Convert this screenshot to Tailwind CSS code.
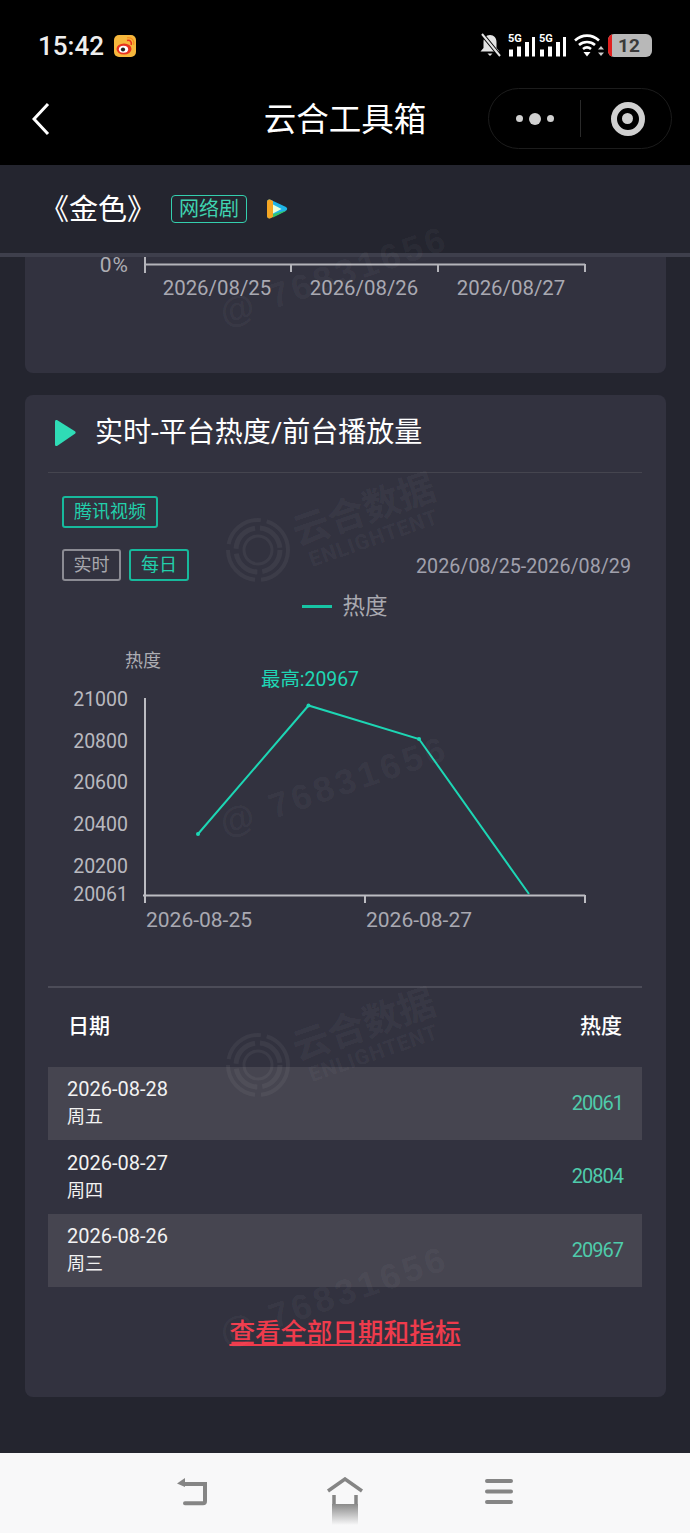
<!DOCTYPE html>
<html lang="zh-CN">
  <head>
    <meta charset="UTF-8" />
    <meta name="viewport" content="width=device-width, initial-scale=1.0" />
    <title>云合工具箱</title>
    <script src="https://cdn.jsdelivr.net/npm/@tailwindcss/browser@4"></script>
  </head>
  <body class="bg-[#24252f] text-white antialiased font-[family-name:Roboto,'Noto_Sans_CJK_SC',sans-serif]">
    <div class="relative w-[690px] h-[1533px] overflow-hidden flex flex-col">
      <!-- status bar -->
      <div class="relative z-20 bg-black h-[82px] shrink-0 pt-[24px] pl-[38px] pr-[38px] flex items-start justify-between">
        <div class="flex items-center gap-[10px] h-[44px]">
          <span class="text-[26px] font-medium text-[#eeeeee] leading-none">15:42</span>
          <svg width="22" height="22" viewBox="0 0 22 22">
            <rect width="22" height="22" rx="5" fill="#f6b73c" />
            <ellipse cx="10" cy="14" rx="7.5" ry="5.5" fill="#e8321f" />
            <ellipse cx="9.5" cy="14.2" rx="4.6" ry="3.5" fill="#fff" />
            <circle cx="9" cy="14.5" r="2.1" fill="#222" />
            <path d="M13 5.5c3-.8 5 1.300 4.200 4.500" fill="none" stroke="#e8321f" stroke-width="1.600" />
            <path d="M13 2.800c5-.7 7.500 2.700 6.600 7" fill="none" stroke="#f98b1e" stroke-width="1.200" />
          </svg>
        </div>
        <div class="flex items-center h-[44px] -mt-[1px]">
          <svg width="24" height="24" viewBox="0 0 24 24">
            <path d="M11 2c-4 0-6.500 3-6.500 7v6l-3 3.500h19l-3-3.500v-6c0-4-2.500-7-6.500-7z" fill="#e4e4e4" />
            <path d="M8.500 20.500h5l-2.500 2.500z" fill="#e4e4e4" />
            <path d="M3 1l18 22" stroke="#000" stroke-width="4" />
            <path d="M3 1l18 22" stroke="#e4e4e4" stroke-width="2" />
          </svg>
          <svg width="29" height="26" viewBox="0 0 29 26" class="ml-[4px]">
            <text x="1" y="10" class="text-[11px] font-bold" fill="#fff">5G</text>
            <path d="M2 17.500h4v7h-4zM10 14.500h4v10h-4zM18 10h4v14.500h-4zM25 5h3v19.500h-3z" fill="#fff" />
          </svg>
          <svg width="29" height="26" viewBox="0 0 29 26" class="ml-[2px]">
            <text x="1" y="10" class="text-[11px] font-bold" fill="#fff">5G</text>
            <path d="M2 17.500h4v7h-4zM10 14.500h4v10h-4zM18 10h4v14.500h-4zM25 5h3v19.500h-3z" fill="#fff" />
          </svg>
          <svg width="32" height="26" viewBox="0 0 32 26" class="ml-[6px]">
            <path d="M2 8.500c7-6.500 17-6.500 24 0M6 13c4.500-4 11.500-4 16 0M10 17c2.500-2 5.500-2 8 0" fill="none" stroke="#fff" stroke-width="2.600" />
            <path d="M10.500 20h7l-3.500 4.500z" fill="#fff" />
            <path d="M28 14l3 3.500h-6zM28 24l3-3.500h-6z" fill="#ccc" />
          </svg>
          <div class="relative w-[44px] h-[23px] rounded-[6px] bg-[#b8b8b8] ml-[3px] overflow-hidden flex items-center justify-center">
            <span class="absolute left-0 top-0 bottom-0 w-[4px] bg-[#e0201f]"></span>
            <span class="text-[19px] font-bold text-[#3a3a3a] leading-none pr-[2px]">12</span>
          </div>
        </div>
      </div>

      <!-- nav bar -->
      <div class="relative z-20 bg-black h-[83px] shrink-0 grid grid-cols-[1fr_auto_1fr] items-center px-[18px]">
        <svg width="18" height="34" viewBox="0 0 18 34" class="ml-[14px] -mt-[10px]">
          <path d="M16 2L2 17l14 15" fill="none" stroke="#fff" stroke-width="3" />
        </svg>
        <h1 class="text-[32.5px] leading-none font-normal text-white -mt-[6px]">云合工具箱</h1>
        <div class="justify-self-end -mt-[10px] w-[184px] h-[61px] rounded-full border border-[#1c1c1c] flex items-center">
          <div class="w-[92px] h-[37px] border-r border-[#2a2a2a] flex items-center justify-center gap-[6px]">
            <span class="w-[7px] h-[7px] rounded-full bg-[#d0d0d0]"></span>
            <span class="w-[12px] h-[12px] rounded-full bg-[#d0d0d0]"></span>
            <span class="w-[7px] h-[7px] rounded-full bg-[#d0d0d0]"></span>
          </div>
          <div class="flex-1 flex justify-center pl-[3px]">
            <div class="w-[34px] h-[34px] rounded-full border-[6px] border-[#d0d0d0] flex items-center justify-center">
              <span class="w-[11px] h-[11px] rounded-full bg-[#d0d0d0]"></span>
            </div>
          </div>
        </div>
      </div>

      <!-- drama title -->
      <div class="relative z-[5] h-[92px] shrink-0 bg-[#24252f] border-b-[4px] border-[#3e3f4c] flex items-center pl-[40px]">
        <span class="text-[29px] leading-none text-white pt-[2px]">《金色》</span>
        <span class="ml-[15px] h-[28px] w-[76px] rounded-[4px] border border-[#34cfae] text-[#3fd3b0] text-[20px] leading-none flex items-center justify-center">网络剧</span>
        <svg width="22" height="20" viewBox="0 0 22 20" class="ml-[19px]">
          <path d="M1 3c0-2 1.500-3 3.500-2.200l15 7c2.300 1.200 2.300 3 0 4.200l-15 7c-2 .8-3.500-.2-3.500-2.200z" fill="#1fb6e8" />
          <path d="M1 3c0-2 1.500-3 3.500-2.200l2.500 1.200v16l-2.500 1.200c-2 .8-3.500-.2-3.500-2.200z" fill="#f5a623" />
          <path d="M7 15l13-3.500c-.300.400-.500.700-1 1l-12 6z" fill="#35c46a" />
          <path d="M7 5.500l8.500 4.500-8.500 4.500z" fill="#eaffd8" />
        </svg>
      </div>

      <main class="flex-1 pl-[25px] pr-[24px] bg-[#24252f]">
        <!-- card 1, scrolled to its bottom -->
        <section class="h-[116px] bg-[#32323f] rounded-b-[8px]">
          <svg width="640" height="50" viewBox="25 257 640 50" class="block overflow-visible">
            <path d="M145 257v16M145 264.500h440M291 264v8M438 264v8M585 264v8" fill="none" stroke="#b4b4ba" stroke-width="2" />
            <text x="129" y="271.500" text-anchor="end" class="text-[21px] tracking-[1px]" fill="#adadb3">0%</text>
            <g class="text-[20.400px]" fill="#a9a9b2" text-anchor="middle">
              <text x="217" y="295">2026/08/25</text>
              <text x="364" y="295">2026/08/26</text>
              <text x="511" y="295">2026/08/27</text>
            </g>
          </svg>
        </section>

        <!-- card 2 -->
        <section class="mt-[22px] h-[1002px] bg-[#32323f] rounded-[8px] pl-[23px] pr-[24px]">
          <div class="h-[78px] border-b border-[#45454f] flex items-center pl-[6px] pb-[2px]">
            <svg width="22" height="28" viewBox="0 0 22 28">
              <path d="M1 2.500v23c0 1.500 1.200 2 2.400 1.300l17.500-12c1-.7 1-1.800 0-2.500L3.400 1.200C2.200.5 1 1 1 2.500z" fill="#2fdcb6" />
            </svg>
            <h2 class="ml-[19px] text-[28px] leading-none font-normal text-white">实时-平台热度/前台播放量</h2>
          </div>

          <div class="pl-[14px] pt-[23px]">
            <span class="inline-flex items-center justify-center w-[96px] h-[32px] rounded-[3px] border-2 border-[#17b99c] text-[#22cfab] text-[18px] leading-none">腾讯视频</span>
          </div>
          <div class="flex items-center pl-[14px] pr-[11px] mt-[21px]">
            <span class="flex items-center justify-center w-[59px] h-[32px] rounded-[3px] border-2 border-[#8b8b93] text-[#a7a7ad] text-[18px] leading-none">实时</span>
            <span class="ml-[8px] flex items-center justify-center w-[60px] h-[32px] rounded-[3px] border-2 border-[#17b99c] text-[#22cfab] text-[18px] leading-none">每日</span>
            <span class="ml-auto mt-[3px] text-[#a0a0ac] text-[19.700px] leading-none">2026/08/25-2026/08/29</span>
          </div>
          <div class="flex items-center justify-center gap-[10px] h-[28px] mt-[11px]">
            <span class="w-[30px] h-[3px] bg-[#17c4a4]"></span>
            <span class="text-[#a9a9b0] text-[22.500px] leading-none">热度</span>
          </div>

          <!-- line chart -->
          <svg width="594" height="290" viewBox="48 640 594 290" class="block mt-[20px] overflow-visible">
            <text x="125" y="667" class="text-[18px]" fill="#adadb3">热度</text>
            <text x="261" y="686" class="text-[19.400px]" fill="#1fd6b4">最高:20967</text>
            <g class="text-[19.500px]" fill="#b9b9bf" text-anchor="end">
              <text x="128" y="706">21000</text>
              <text x="128" y="748">20800</text>
              <text x="128" y="789">20600</text>
              <text x="128" y="831">20400</text>
              <text x="128" y="873">20200</text>
              <text x="128" y="901">20061</text>
            </g>
            <path d="M145 698v205M143 895.500h442M365 895v8M585 895v8" fill="none" stroke="#bcbcc2" stroke-width="2" />
            <polyline points="198,834 308.500,705.500 419,739 529,894" fill="none" stroke="#1dd6b4" stroke-width="2" />
            <circle cx="198" cy="834" r="2" fill="#1dd6b4" />
            <circle cx="308.500" cy="705.500" r="2" fill="#1dd6b4" />
            <circle cx="419" cy="739" r="2" fill="#1dd6b4" />
            <g class="text-[21px]" fill="#a9a9b2" text-anchor="middle">
              <text x="199" y="927">2026-08-25</text>
              <text x="419" y="927">2026-08-27</text>
            </g>
          </svg>

          <!-- table -->
          <div class="mt-[56px] border-t-2 border-[#4c4c58] h-[81px] flex items-center justify-between px-[20px]">
            <span class="text-[21px] leading-none font-medium -mt-[2px]">日期</span>
            <span class="text-[21px] leading-none font-medium -mt-[2px]">热度</span>
          </div>
          <div class="h-[73px] bg-[#464550] flex items-center justify-between pl-[19px] pr-[19px]">
            <div class="text-[20px] leading-[27px] text-[#f2f2f2] -mt-[1px]"><div>2026-08-28</div><div class="text-[18px]">周五</div></div>
            <span class="text-[20px] tracking-[-1px] text-[#4fcbab] leading-none -mt-[2px]">20061</span>
          </div>
          <div class="h-[74px] flex items-center justify-between pl-[19px] pr-[19px]">
            <div class="text-[20px] leading-[27px] text-[#f2f2f2] -mt-[1px]"><div>2026-08-27</div><div class="text-[18px]">周四</div></div>
            <span class="text-[20px] tracking-[-1px] text-[#4fcbab] leading-none -mt-[2px]">20804</span>
          </div>
          <div class="h-[73px] bg-[#464550] flex items-center justify-between pl-[19px] pr-[19px]">
            <div class="text-[20px] leading-[27px] text-[#f2f2f2] -mt-[1px]"><div>2026-08-26</div><div class="text-[18px]">周三</div></div>
            <span class="text-[20px] tracking-[-1px] text-[#4fcbab] leading-none -mt-[2px]">20967</span>
          </div>
          <div class="mt-[34px] text-center">
            <a href="#" class="text-[25.700px] leading-none font-medium text-[#ef3b4c] underline decoration-2 underline-offset-[2px]">查看全部日期和指标</a>
          </div>
        </section>
      </main>

      <!-- bottom nav -->
      <div class="relative z-20 h-[80px] shrink-0 bg-[#f8f8f9] flex items-start justify-center gap-[118px] pt-[24px]">
        <svg width="32" height="30" viewBox="0 0 32 30">
          <path d="M9 7h20v17c0 1.500-.8 2.300-2 2.300H9" fill="none" stroke="#858585" stroke-width="4" stroke-linecap="round" />
          <path d="M1 6.500L9 1v9z" fill="#858585" />
        </svg>
        <svg width="38" height="50" viewBox="0 0 38 50">
          <defs>
            <linearGradient id="homeFade" x1="0" y1="0" x2="0" y2="1">
              <stop offset="0" stop-color="#8a8a8a" />
              <stop offset="1" stop-color="#f8f8f9" />
            </linearGradient>
          </defs>
          <path d="M2 14L19 2l17 12" fill="none" stroke="#858585" stroke-width="3.500" />
          <path d="M8 18v11M30 18v11" fill="none" stroke="#858585" stroke-width="3.500" />
          <rect x="6" y="27" width="26" height="21" fill="url(#homeFade)" />
        </svg>
        <svg width="30" height="30" viewBox="0 0 30 30" class="ml-[2px]">
          <path d="M3 4h24M3 14.500h24M3 25h24" fill="none" stroke="#858585" stroke-width="4" stroke-linecap="round" />
        </svg>
      </div>

      <!-- watermark over the page content -->
      <svg class="absolute left-0 top-0 z-10 pointer-events-none" width="690" height="1533" viewBox="0 0 690 1533" fill="#ffffff" fill-opacity="0.05" stroke="none">
        <g class="font-bold font-[family-name:'Liberation_Sans',sans-serif] text-[35px] tracking-[4px]" text-anchor="middle">
          <text transform="translate(338 287) rotate(-19)">@ 76831656</text>
          <text transform="translate(338 797) rotate(-19)">@ 76831656</text>
          <text transform="translate(338 1307) rotate(-19)">@ 76831656</text>
        </g>
        <g>
          <g fill="none" stroke="#ffffff" stroke-opacity="0.05">
            <circle cx="258" cy="550" r="30" stroke-width="4" stroke-dasharray="44 6" />
            <circle cx="258" cy="550" r="22" stroke-width="5" stroke-dasharray="30 5" />
            <circle cx="258" cy="550" r="14" stroke-width="3" />
          </g>
          <text transform="translate(368 522) rotate(-19)" text-anchor="middle" class="font-bold text-[37px]">云合数据</text>
          <text transform="translate(376 545) rotate(-19)" text-anchor="middle" class="font-bold text-[21px] tracking-[1px]">ENLIGHTENT</text>
        </g>
        <g>
          <g fill="none" stroke="#ffffff" stroke-opacity="0.05">
            <circle cx="258" cy="1065" r="30" stroke-width="4" stroke-dasharray="44 6" />
            <circle cx="258" cy="1065" r="22" stroke-width="5" stroke-dasharray="30 5" />
            <circle cx="258" cy="1065" r="14" stroke-width="3" />
          </g>
          <text transform="translate(368 1037) rotate(-19)" text-anchor="middle" class="font-bold text-[37px]">云合数据</text>
          <text transform="translate(376 1060) rotate(-19)" text-anchor="middle" class="font-bold text-[21px] tracking-[1px]">ENLIGHTENT</text>
        </g>
      </svg>
    </div>
  </body>
</html>
